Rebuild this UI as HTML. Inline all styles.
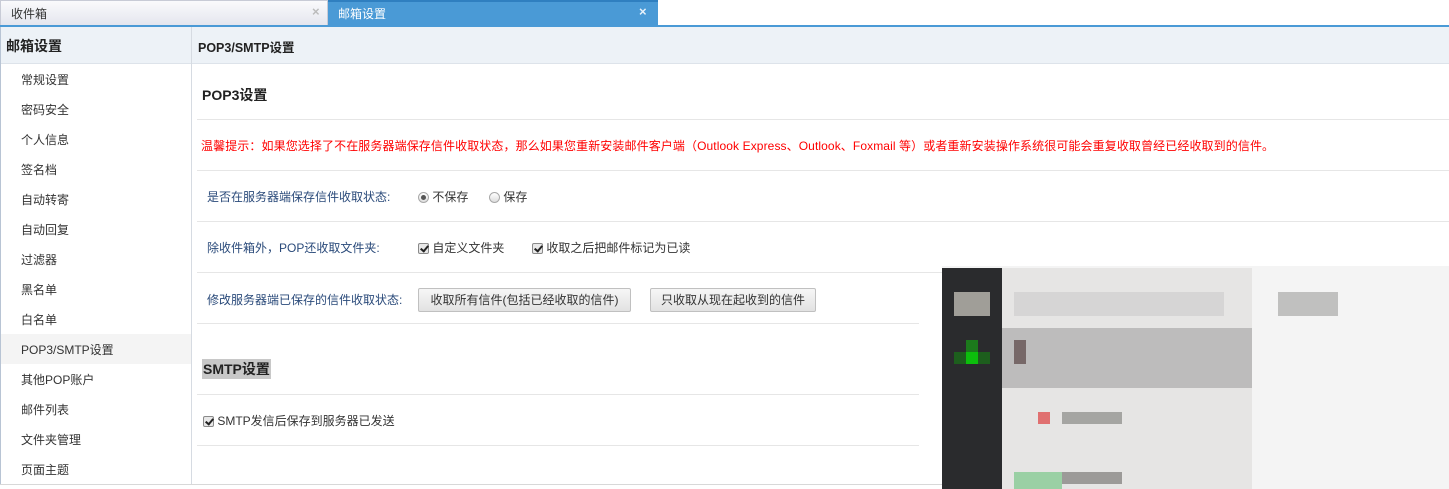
<!DOCTYPE html>
<html><head><meta charset="utf-8"><style>
*{margin:0;padding:0;box-sizing:border-box}
body{width:1449px;height:489px;overflow:hidden;background:#fff;font-family:"Liberation Sans","Noto Sans CJK SC",sans-serif;font-size:12px;color:#333;position:relative}
.a{position:absolute;white-space:nowrap}
.tab1{left:0;top:0;width:328px;height:25px;background:linear-gradient(#fafafc,#e4e6ee);border:1px solid #c8cbd6;border-bottom:none}
.tab2{left:328px;top:0;width:330px;height:25px;background:#4a9ad6;border-top:2px solid #2f7fc0;color:#fff}
.line{height:1px;background:#e6e6e6}
.side{color:#333;left:21px;font-size:12px}
.lbl{color:#2a4a7a}
.radio{display:inline-block;width:11px;height:11px;border:1px solid #a8a8a8;border-radius:50%;background:linear-gradient(#fff,#ddd);vertical-align:-2px;position:relative}
.radio.on::after{content:"";position:absolute;left:2px;top:2px;width:5px;height:5px;border-radius:50%;background:#555}
.cb{display:inline-block;width:11px;height:11px;border:1px solid #8a8a8a;border-radius:2px;background:#e8e8e8;vertical-align:-2px;position:relative}
.cb::after{content:"";position:absolute;left:3px;top:0px;width:3px;height:6px;border:solid #222;border-width:0 2px 2px 0;transform:rotate(40deg)}
.btn{height:24px;border:1px solid #c0c0c0;border-radius:2px;background:linear-gradient(#f6f6f6,#e2e2e2);color:#333;line-height:22px;text-align:center}
</style></head><body>
<div class="a tab1"><span class="a" style="left:10px;top:4px;color:#333">收件箱</span><span class="a" style="left:311px;top:3px;color:#bbb;font-size:13px;font-weight:bold">×</span></div>
<div class="a tab2"><span class="a" style="left:10px;top:3px">邮箱设置</span><span class="a" style="left:311px;top:2px;color:#e8f2fb;font-size:13px;font-weight:bold">×</span></div>
<div class="a" style="left:0;top:25px;width:1449px;height:2px;background:#4a9ad6"></div>
<div class="a" style="left:0;top:27px;width:1449px;height:37px;background:#edf2f7;border-bottom:1px solid #dde3ea"></div>
<div class="a" style="left:0;top:27px;width:1px;height:458px;background:#b8c4d4"></div>
<div class="a" style="left:191px;top:27px;width:1px;height:458px;background:#d6dbe2"></div>
<div class="a" style="left:6px;top:36px;font-size:14px;font-weight:bold;color:#222">邮箱设置</div>
<div class="a" style="left:198px;top:37px;font-weight:bold;color:#222;font-size:12.5px">POP3/SMTP设置</div>
<div class="a" style="left:1px;top:334px;width:190px;height:30px;background:#f4f4f4"></div>
<div class="a side" style="top:71px">常规设置</div>
<div class="a side" style="top:101px">密码安全</div>
<div class="a side" style="top:131px">个人信息</div>
<div class="a side" style="top:161px">签名档</div>
<div class="a side" style="top:191px">自动转寄</div>
<div class="a side" style="top:221px">自动回复</div>
<div class="a side" style="top:251px">过滤器</div>
<div class="a side" style="top:281px">黑名单</div>
<div class="a side" style="top:311px">白名单</div>
<div class="a side" style="top:341px">POP3/SMTP设置</div>
<div class="a side" style="top:371px">其他POP账户</div>
<div class="a side" style="top:401px">邮件列表</div>
<div class="a side" style="top:431px">文件夹管理</div>
<div class="a side" style="top:461px">页面主题</div>
<div class="a" style="left:0;top:484px;width:1449px;height:1px;background:#d8d8d8"></div>

<div class="a" style="left:202px;top:85px;font-size:14px;font-weight:bold;color:#222">POP3设置</div>
<div class="a line" style="left:197px;top:119px;width:1252px"></div>
<div class="a" style="left:201px;top:137px;color:#f00;letter-spacing:0.1px">温馨提示：如果您选择了不在服务器端保存信件收取状态，那么如果您重新安装邮件客户端（Outlook Express、Outlook、Foxmail 等）或者重新安装操作系统很可能会重复收取曾经已经收取到的信件。</div>
<div class="a line" style="left:197px;top:170px;width:1252px"></div>
<div class="a lbl" style="left:207px;top:188px">是否在服务器端保存信件收取状态:</div>
<div class="a" style="left:418px;top:188px"><span class="radio on"></span> 不保存</div>
<div class="a" style="left:489px;top:188px"><span class="radio"></span> 保存</div>
<div class="a line" style="left:197px;top:221px;width:1252px"></div>
<div class="a lbl" style="left:207px;top:239px">除收件箱外，POP还收取文件夹:</div>
<div class="a" style="left:418px;top:239px"><span class="cb"></span> 自定义文件夹</div>
<div class="a" style="left:532px;top:239px"><span class="cb"></span> 收取之后把邮件标记为已读</div>
<div class="a line" style="left:197px;top:272px;width:1252px"></div>
<div class="a lbl" style="left:207px;top:291px">修改服务器端已保存的信件收取状态:</div>
<div class="a btn" style="left:418px;top:288px;width:213px">收取所有信件(包括已经收取的信件)</div>
<div class="a btn" style="left:650px;top:288px;width:166px">只收取从现在起收到的信件</div>
<div class="a line" style="left:197px;top:323px;width:722px"></div>
<div class="a" style="left:202px;top:359px;font-size:14px;font-weight:bold;color:#222;background:#c8c8c8;padding:0 1px">SMTP设置</div>
<div class="a line" style="left:197px;top:394px;width:722px"></div>
<div class="a" style="left:203px;top:412px"><span class="cb"></span> SMTP发信后保存到服务器已发送</div>
<div class="a line" style="left:197px;top:445px;width:722px"></div>

<!-- blurred overlay -->
<div class="a" style="left:942px;top:266px;width:507px;height:223px;background:#f4f4f4"></div>
<div class="a" style="left:942px;top:268px;width:60px;height:221px;background:#2a2b2d"></div>
<div class="a" style="left:954px;top:292px;width:36px;height:24px;background:#a09e98"></div>
<div class="a" style="left:966px;top:340px;width:12px;height:24px;background:#1c7a1c"></div>
<div class="a" style="left:954px;top:352px;width:36px;height:12px;background:#1d5e1d"></div>
<div class="a" style="left:966px;top:352px;width:12px;height:12px;background:#0cbf0c"></div>
<div class="a" style="left:1002px;top:268px;width:250px;height:221px;background:#e6e5e4"></div>
<div class="a" style="left:1014px;top:292px;width:210px;height:24px;background:#d6d5d5"></div>
<div class="a" style="left:1002px;top:328px;width:250px;height:60px;background:#bdbcbc"></div>
<div class="a" style="left:1014px;top:340px;width:12px;height:24px;background:#776868"></div>
<div class="a" style="left:1038px;top:412px;width:12px;height:12px;background:#e07070"></div>
<div class="a" style="left:1062px;top:412px;width:60px;height:12px;background:#a5a5a2"></div>
<div class="a" style="left:1014px;top:472px;width:48px;height:17px;background:#9ad0a4"></div>
<div class="a" style="left:1062px;top:472px;width:60px;height:12px;background:#9c9a98"></div>
<div class="a" style="left:1278px;top:292px;width:60px;height:24px;background:#c0c0bf"></div>
</body></html>
